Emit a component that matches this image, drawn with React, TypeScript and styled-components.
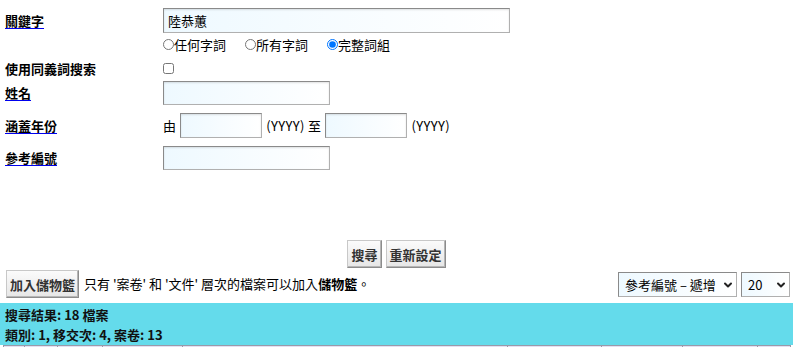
import React from "react";
import styled, { createGlobalStyle } from "styled-components";
import { ChevronDown } from "lucide-react";

const GlobalStyle = createGlobalStyle`
  html, body { margin: 0; padding: 0; background: #fff; }
  body {
    font-family: "Noto Sans CJK TC", "Noto Sans CJK SC", sans-serif;
    font-size: 13px;
    color: #000;
  }
  * { box-sizing: border-box; }
`;

const Page = styled.div`
  width: 793px;
  height: 347px;
  overflow: hidden;
  display: flex;
  flex-direction: column;
`;

const Form = styled.div`
  display: flex;
  flex-direction: column;
  padding: 8px 0 0 5px;
`;

const Row = styled.div<{ $h: number; $mt?: number }>`
  display: flex;
  align-items: center;
  height: ${(p) => p.$h}px;
  margin-top: ${(p) => p.$mt ?? 0}px;
`;

const Label = styled.div<{ $link?: boolean }>`
  width: 158px;
  flex: none;
  font-weight: bold;
  line-height: 16px;
  text-decoration: ${(p) => (p.$link ? "underline" : "none")};
  text-decoration-color: #0000ee;
  text-underline-offset: 2px;
`;

const Field = styled.div`
  display: flex;
  align-items: center;
  gap: 4px;
`;

const TextInput = styled.input<{ $w: number; $h: number }>`
  width: ${(p) => p.$w}px;
  height: ${(p) => p.$h}px;
  margin: 0;
  padding: 0 4px;
  font-family: inherit;
  font-size: 13px;
  color: #000;
  border: 1px solid;
  border-color: #8a8a8a #b0b0b0 #b0b0b0 #8a8a8a;
  box-shadow: inset 0 1px 2px rgba(0, 0, 0, 0.12);
  background: linear-gradient(to right, #eef9ff, #ffffff);
  outline: none;
`;

const Plain = styled.span`
  line-height: 16px;
  letter-spacing: 0.35px;
`;

const RadioGroup = styled.div`
  display: flex;
  align-items: center;
`;

const RadioLabel = styled.label`
  display: flex;
  align-items: center;
  margin-right: 19px;
  line-height: 16px;
`;

const Radio = styled.input`
  width: 11px;
  height: 11px;
  margin: 0 0 1px 0;
`;

const Check = styled.input`
  width: 11px;
  height: 11px;
  margin: 0;
`;

const ButtonBar = styled.div`
  display: flex;
  justify-content: center;
  gap: 4px;
  margin-top: 70px;
  height: 28px;
`;

const Button = styled.button`
  height: 28px;
  margin: 0;
  padding: 0 3px;
  font-family: inherit;
  font-size: 13px;
  font-weight: bold;
  color: #333;
  background: linear-gradient(#fbfbfb, #e6e6e6);
  border: 1px solid;
  border-color: #c8c8c8 #8c8c8c #8c8c8c #c8c8c8;
  box-shadow: inset -1px -1px 0 #b5b5b5;
`;

const CartBar = styled.div`
  display: flex;
  align-items: center;
  justify-content: space-between;
  height: 28px;
  margin-top: 2px;
  padding: 0 3px 0 6px;
`;

const CartLeft = styled.div`
  display: flex;
  align-items: center;
  gap: 5px;
`;

const Note = styled.span`
  line-height: 16px;
  b { font-weight: bold; }
`;

const Selects = styled.div`
  display: flex;
  align-items: center;
  gap: 4px;
`;

const SelectWrap = styled.div<{ $w: number }>`
  position: relative;
  width: ${(p) => p.$w}px;
  height: 25px;
`;

const Select = styled.select`
  appearance: none;
  width: 100%;
  height: 100%;
  margin: 0;
  padding: 0 0 0 6px;
  font-family: inherit;
  font-size: 13px;
  color: #000;
  border: 1px solid;
  border-color: #8a8a8a #b0b0b0 #b0b0b0 #8a8a8a;
  background: linear-gradient(to right, #eef9ff, #ffffff);
  outline: none;
`;

const Arrow = styled(ChevronDown)`
  position: absolute;
  right: 3px;
  top: 7px;
  pointer-events: none;
`;

const ResultBar = styled.div`
  margin-top: 5px;
  height: 42px;
  padding: 2px 0 0 5px;
  background: #64dbeb;
  font-weight: bold;
  color: #111;
`;

const ResultLine = styled.div`
  line-height: 20px;
`;

const HeadTable = styled.table`
  margin-left: 3px;
  width: 787px;
  border-collapse: collapse;
  table-layout: fixed;
`;

const HeadCell = styled.th<{ $w: number }>`
  width: ${(p) => p.$w}px;
  height: 20px;
  background: #e4e0f2;
  border: 1px solid #9a9aa8;
`;

const colWidths = [21, 33, 45, 80, 325, 94, 81, 75, 33];

export default function App() {
  return (
    <>
      <GlobalStyle />
      <Page>
        <Form>
          <Row $h={25}>
            <Label $link>關鍵字</Label>
            <Field>
              <TextInput $w={347} $h={25} defaultValue="陸恭蕙" />
            </Field>
          </Row>
          <Row $h={24}>
            <Label />
            <RadioGroup>
              <RadioLabel>
                <Radio type="radio" name="mode" />
                任何字詞
              </RadioLabel>
              <RadioLabel>
                <Radio type="radio" name="mode" />
                所有字詞
              </RadioLabel>
              <RadioLabel>
                <Radio type="radio" name="mode" defaultChecked />
                完整詞組
              </RadioLabel>
            </RadioGroup>
          </Row>
          <Row $h={23}>
            <Label>使用同義詞搜索</Label>
            <Field>
              <Check type="checkbox" />
            </Field>
          </Row>
          <Row $h={24} $mt={1}>
            <Label $link>姓名</Label>
            <Field>
              <TextInput $w={167} $h={24} />
            </Field>
          </Row>
          <Row $h={25} $mt={8}>
            <Label $link>涵蓋年份</Label>
            <Field>
              <Plain>由</Plain>
              <TextInput $w={82} $h={25} />
              <Plain>(YYYY) 至</Plain>
              <TextInput $w={82} $h={25} />
              <Plain>(YYYY)</Plain>
            </Field>
          </Row>
          <Row $h={24} $mt={8}>
            <Label $link>參考編號</Label>
            <Field>
              <TextInput $w={167} $h={24} />
            </Field>
          </Row>
        </Form>

        <ButtonBar>
          <Button>搜尋</Button>
          <Button>重新設定</Button>
        </ButtonBar>

        <CartBar>
          <CartLeft>
            <Button>加入儲物籃</Button>
            <Note>
              只有 '案卷' 和 '文件' 層次的檔案可以加入<b>儲物籃</b>。
            </Note>
          </CartLeft>
          <Selects>
            <SelectWrap $w={119}>
              <Select defaultValue="asc">
                <option value="asc">參考編號 – 遞增</option>
                <option value="desc">參考編號 – 遞減</option>
              </Select>
              <Arrow size={12} strokeWidth={4} color="#222" />
            </SelectWrap>
            <SelectWrap $w={49}>
              <Select defaultValue="20">
                <option value="20">20</option>
                <option value="50">50</option>
              </Select>
              <Arrow size={12} strokeWidth={4} color="#222" />
            </SelectWrap>
          </Selects>
        </CartBar>

        <ResultBar>
          <ResultLine>搜尋結果: 18 檔案</ResultLine>
          <ResultLine>類別: 1, 移交次: 4, 案卷: 13</ResultLine>
        </ResultBar>

        <HeadTable>
          <thead>
            <tr>
              {colWidths.map((w, i) => (
                <HeadCell key={i} $w={w} />
              ))}
            </tr>
          </thead>
        </HeadTable>
      </Page>
    </>
  );
}
